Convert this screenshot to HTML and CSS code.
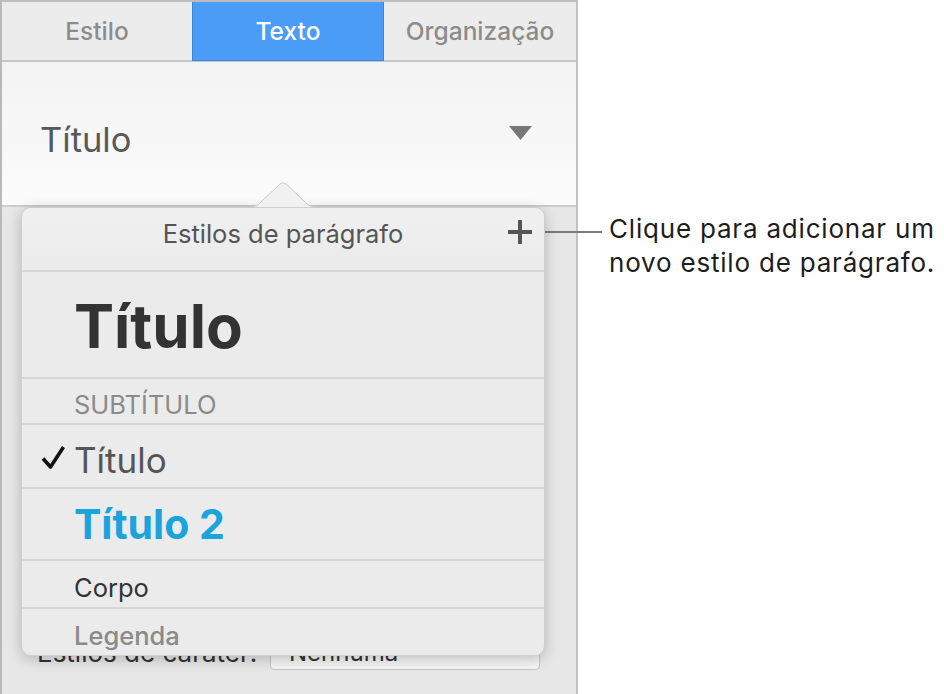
FILE: index.html
```html
<!DOCTYPE html>
<html lang="pt">
<head>
<meta charset="utf-8">
<title>Estilos de parágrafo</title>
<link rel="stylesheet" href="styles.css">
</head>
<body>
<div class="page">
  <div class="inspector">
    <div class="tabs">
      <div class="tab">Estilo</div>
      <div class="tab active">Texto</div>
      <div class="tab">Organização</div>
    </div>
    <div class="selector">
      <span class="selector-value">Título</span>
      <svg class="selector-arrow" width="23" height="14" viewBox="0 0 23 14"><path d="M0 0 H23 L11.5 14 Z" fill="#777"/></svg>
    </div>
    <div class="pane">
      <div class="char-row">
        <span class="char-label">Estilos de caráter:</span>
        <span class="char-field">Nenhuma</span>
      </div>
    </div>

    <svg class="pop-tip" width="72" height="26" viewBox="0 0 72 26">
      <path d="M0 25 C8 25 10 24 14 20 L33 2 C34.5 0.6 37.5 0.6 39 2 L58 20 C62 24 64 25 72 25 Z" fill="#f1f1f1"/>
      <path d="M0 25 C8 25 10 24 14 20 L33 2 C34.5 0.6 37.5 0.6 39 2 L58 20 C62 24 64 25 72 25" fill="none" stroke="#c9c9c9" stroke-width="1"/>
    </svg>
    <div class="popover">
      <div class="pop-header">
        <span></span>
        <span class="pop-title">Estilos de parágrafo</span>
        <svg class="plus" width="26" height="26" viewBox="0 0 26 26"><path d="M13 1 V25 M1 13 H25" stroke="#555" stroke-width="4"/></svg>
      </div>
      <div class="row row-title"><span class="gutter"></span><span>Título</span></div>
      <div class="row row-sub"><span class="gutter"></span><span>SUBTÍTULO</span></div>
      <div class="row row-check">
        <span class="gutter"><svg class="check" width="24" height="24" viewBox="0 0 24 24"><path d="M2 13.5 L9.5 22 L22.5 2" fill="none" stroke="#111" stroke-width="3.6" stroke-linejoin="round"/></svg></span>
        <span>Título</span>
      </div>
      <div class="row row-t2"><span class="gutter"></span><span>Título 2</span></div>
      <div class="row row-body"><span class="gutter"></span><span>Corpo</span></div>
      <div class="row row-caption"><span class="gutter"></span><span>Legenda</span></div>
    </div>
  </div>

  <div class="callout">
    <span class="callout-line"></span>
    <p class="callout-text">Clique para adicionar um<br>novo estilo de parágrafo.</p>
  </div>
</div>
</body>
</html>
```
FILE: styles.css
```css
* { box-sizing: border-box; }
html, body { margin: 0; padding: 0; background: #ffffff; }
body { font-family: Inter, Roboto, "Liberation Sans", Arial, sans-serif; width: 944px; height: 694px; overflow: hidden; }

.page { position: relative; width: 944px; height: 694px; }

.inspector {
  position: relative;
  width: 578px;
  height: 694px;
  border-top: 2px solid #bdbdbd;
  border-left: 2px solid #b9b9b9;
  border-right: 2px solid #c2c2c2;
  display: flex;
  flex-direction: column;
  background: #e8e8e8;
}

.tabs {
  display: grid;
  grid-template-columns: 190px 192px 1fr;
  height: 60px;
  border-bottom: 2px solid #c5c5c5;
  background: #ececec;
}
.tab {
  height: 58px;
  line-height: 58px;
  text-align: center;
  font-size: 24.5px;
  font-weight: 500;
  color: #8c8c8c;
}
.tab.active {
  background: #4a9cf6;
  color: #ffffff;
  border: 1px solid #3c84d6;
  border-top: none;
  height: 59px;
  line-height: 58px;
}

.selector {
  height: 145px;
  border-bottom: 2px solid #cdcdcd;
  background: linear-gradient(#f3f3f3, #fbfbfb);
  display: flex;
  justify-content: space-between;
  align-items: flex-start;
  padding: 0 44px 0 38px;
}
.selector-value {
  font-size: 34.5px;
  line-height: 1;
  color: #585858;
  margin-top: 61px;
}
.selector-arrow { margin-top: 64px; display: block; }

.pane { flex: 1; background: #e7e7e7; }
.char-row {
  margin-top: 427px;
  display: flex;
  align-items: center;
  padding-left: 35px;
}
.char-label { font-size: 26px; color: #333; width: 233px; }
.char-field {
  width: 270px;
  height: 36px;
  background: #f4f4f4;
  border: 1px solid #c6c6c6;
  border-radius: 4px;
  font-size: 24px;
  color: #333;
  padding: 4px 0 0 18px;
  line-height: 28px;
}

.pop-tip { position: absolute; left: 245px; top: 180px; display: block; z-index: 3; }

.popover {
  position: absolute;
  left: 19px;
  top: 205px;
  width: 524px;
  height: 449px;
  background: #ebebeb;
  border: 1px solid #cfcfcf;
  border-radius: 10px;
  box-shadow: 0 3px 14px rgba(0, 0, 0, 0.22);
  display: flex;
  flex-direction: column;
  overflow: hidden;
  z-index: 2;
}

.pop-header {
  height: 62px;
  display: grid;
  grid-template-columns: 1fr auto 1fr;
  align-items: start;
  background: linear-gradient(#f0f0f0, #ebebeb);
}
.pop-title {
  font-size: 25.5px;
  line-height: 1;
  color: #555;
  margin-top: 13px;
}
.plus { justify-self: end; margin: 11px 11px 0 0; display: block; }

.row {
  display: flex;
  align-items: flex-start;
  border-top: 2px solid #d6d6d6;
  line-height: 1;
}
.gutter { width: 52px; flex: none; }

.row-title { height: 107px; font-size: 60px; font-weight: 700; color: #333; padding-top: 24px; }
.row-sub { height: 47px; font-size: 25.5px; color: #8a8a8a; padding-top: 13px; }
.row-check { height: 64px; font-size: 35px; color: #555; padding-top: 18px; }
.row-check .gutter { padding: 2px 0 0 19px; }
.check { display: block; }
.row-t2 { height: 72px; font-size: 41px; font-weight: 700; color: #1ca3dc; padding-top: 15px; }
.row-body { height: 48px; font-size: 25.5px; color: #333; padding-top: 14px; }
.row-caption { height: 48px; font-size: 25.5px; font-weight: 500; color: #8a8a8a; padding-top: 14px; }

.callout {
  position: absolute;
  left: 539px;
  top: 212px;
  display: flex;
  align-items: flex-start;
  gap: 7px;
}
.callout-line {
  display: block;
  width: 63px;
  height: 2px;
  background: #7a7a7a;
  margin-top: 19px;
}
.callout-text {
  margin: 0;
  font-size: 26px;
  letter-spacing: 0.8px;
  line-height: 34px;
  color: #1d1d1d;
  white-space: nowrap;
}
```
